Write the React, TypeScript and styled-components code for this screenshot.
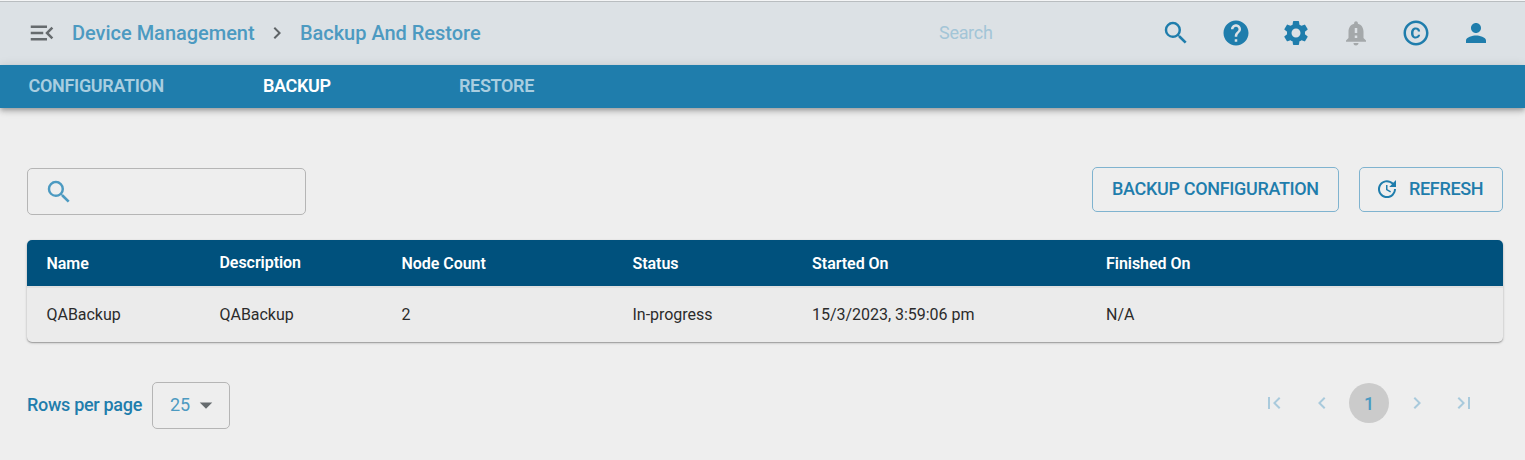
import React from "react";
import styled, { createGlobalStyle } from "styled-components";
import {
  MdArrowDropDown, MdChevronLeft, MdChevronRight, MdCopyright, MdFirstPage, MdHelp, MdLastPage,
  MdMenuOpen, MdNotificationImportant, MdPerson, MdSearch, MdSettings, MdUpdate,
} from "react-icons/md";

const GlobalStyle = createGlobalStyle`
  * { box-sizing: border-box; }
  body { margin: 0; background: #eeeeee; font-family: Roboto, sans-serif; }
  button { font-family: inherit; cursor: pointer; }
  svg { display: block; flex: none; }
`;

const Page = styled.div`
  min-height: 460px;
  background: #eeeeee;
`;

const Header = styled.header`
  display: flex;
  align-items: center;
  height: 65px;
  padding: 0 34px 0 27px;
  background: #dce1e5;
  border-top: 1px solid #f4f5f6;
  box-shadow: inset 0 1px 0 #b9bdc0;
`;

const MenuIcon = styled(MdMenuOpen)`
  color: #666b6e;
  margin-right: 15px;
`;

const Crumb = styled.a`
  color: #4c9ac1;
  font-size: 20px;
  font-weight: 500;
  letter-spacing: -0.02px;
  line-height: 30px;
`;

const Divider = styled(MdChevronRight)`
  color: #5f6467;
  margin: 0 11px 0 10.3px;
`;

const GlobalSearch = styled.input`
  width: 222px;
  margin-left: auto;
  padding: 0 0 2px;
  border: 0;
  outline: 0;
  background: transparent;
  font: 400 18px Roboto, sans-serif;
  letter-spacing: -0.3px;
  &::placeholder { color: #a3c5d7; opacity: 1; }
`;

const Actions = styled.div`
  display: flex;
  gap: 30px;
`;

const IconButton = styled.button<{ $muted?: boolean }>`
  padding: 0;
  border: 0;
  background: none;
  color: ${(p) => (p.$muted ? "#a4a8aa" : "#1f7dac")};
`;

const Tabs = styled.nav`
  display: flex;
  height: 43px;
  padding-left: 28.6px;
  background: #1f7dac;
  box-shadow: 0 2px 4px -1px rgba(0, 0, 0, 0.2), 0 4px 5px rgba(0, 0, 0, 0.14), 0 1px 10px rgba(0, 0, 0, 0.12);
`;

const Tab = styled.a<{ $width: number; $active?: boolean }>`
  width: ${(p) => p.$width}px;
  color: ${(p) => (p.$active ? "#ffffff" : "#a9cee0")};
  font-size: 18px;
  font-weight: 600;
  letter-spacing: -0.34px;
  line-height: 42px;
`;

const Main = styled.main`
  padding: 59px 22px 0 27px;
`;

const Toolbar = styled.div`
  display: flex;
  align-items: flex-start;
  gap: 20px;
`;

const FilterBox = styled.label`
  display: flex;
  align-items: center;
  width: 279px;
  height: 47px;
  margin: 1px auto 0 0;
  padding-left: 16px;
  border: 1px solid #b5b5b5;
  border-radius: 5px;
  color: #4c9ac1;
`;

const OutlinedButton = styled.button<{ $inset: number; $width: number }>`
  display: flex;
  align-items: center;
  gap: 10.5px;
  width: ${(p) => p.$width}px;
  height: 45px;
  padding: 0 0 1px ${(p) => p.$inset}px;
  border: 1px solid #7fb3cf;
  border-radius: 5px;
  background: transparent;
  color: #1f7dac;
  font-size: 18px;
  font-weight: 500;
  letter-spacing: -0.33px;
  white-space: nowrap;
`;

const ButtonLabel = styled.span`
  padding-bottom: 2px;
`;

const Table = styled.div`
  margin-top: 25px;
  border-radius: 5px;
  background: #ebebeb;
  overflow: hidden;
  box-shadow: 0 1px 1px rgba(0, 0, 0, 0.22), 0 1px 3px rgba(0, 0, 0, 0.2);
`;

const columns = "173px 182px 231px 179.6px 294px 1fr";

const HeadRow = styled.div`
  display: grid;
  grid-template-columns: ${columns};
  height: 46px;
  padding-left: 19.5px;
  background: #00517d;
  color: #ffffff;
  font-size: 16px;
  font-weight: 600;
  letter-spacing: -0.05px;
`;

const BodyRow = styled.div`
  display: grid;
  grid-template-columns: ${columns};
  height: 56px;
  padding-left: 19.5px;
  border-top: 2px solid #e0e0e0;
  color: #2b2b2b;
  font-size: 16px;
  letter-spacing: -0.03px;
  line-height: 54px;
`;

const HeadCell = styled.span<{ $raised?: boolean }>`
  line-height: ${(p) => (p.$raised ? "45px" : "47px")};
`;

const Footer = styled.footer`
  display: flex;
  align-items: flex-start;
  margin-top: 40px;
`;

const RowsLabel = styled.span`
  width: 125px;
  color: #1f7dac;
  font-size: 18px;
  font-weight: 500;
  letter-spacing: -0.3px;
  line-height: 46px;
`;

const RowsSelect = styled.button`
  display: flex;
  align-items: center;
  gap: 1px;
  width: 78px;
  height: 47px;
  padding: 0 0 1px 17px;
  border: 1px solid #b5b5b5;
  border-radius: 5px;
  background: transparent;
  color: #4c9ac1;
  font-size: 18px;
  letter-spacing: -0.2px;
  svg { color: #666b6e; }
`;

const SelectValue = styled.span`
  padding-bottom: 1px;
`;

const Pager = styled.div`
  display: flex;
  align-items: center;
  gap: 23.5px;
  height: 40px;
  margin: 1px 27px 0 auto;
  color: #a9cadc;
`;

const CurrentPage = styled.button`
  width: 40px;
  height: 40px;
  margin: 0 -8px;
  padding: 0;
  border: 0;
  border-radius: 50%;
  background: #cbcbcb;
  color: #4c9ac1;
  font-size: 18px;
  font-weight: 500;
`;

const headings = ["Name", "Description", "Node Count", "Status", "Started On", "Finished On"];
const backups = [["QABackup", "QABackup", "2", "In-progress", "15/3/2023, 3:59:06 pm", "N/A"]];

export default function App() {
  return (
    <Page>
      <GlobalStyle />
      <Header>
        <MenuIcon size={30} />
        <Crumb>Device Management</Crumb>
        <Divider size={24} />
        <Crumb>Backup And Restore</Crumb>
        <GlobalSearch placeholder="Search" />
        <Actions>
          <IconButton><MdSearch size={30} /></IconButton>
          <IconButton><MdHelp size={30} /></IconButton>
          <IconButton><MdSettings size={30} /></IconButton>
          <IconButton $muted><MdNotificationImportant size={30} /></IconButton>
          <IconButton><MdCopyright size={30} /></IconButton>
          <IconButton><MdPerson size={30} /></IconButton>
        </Actions>
      </Header>
      <Tabs>
        <Tab $width={234.4}>CONFIGURATION</Tab>
        <Tab $width={196} $active>BACKUP</Tab>
        <Tab $width={120}>RESTORE</Tab>
      </Tabs>
      <Main>
        <Toolbar>
          <FilterBox><MdSearch size={30} /></FilterBox>
          <OutlinedButton $inset={19} $width={247}><ButtonLabel>BACKUP CONFIGURATION</ButtonLabel></OutlinedButton>
          <OutlinedButton $inset={14.5} $width={144}><MdUpdate size={24} /><ButtonLabel>REFRESH</ButtonLabel></OutlinedButton>
        </Toolbar>
        <Table>
          <HeadRow>
            {headings.map((h) => <HeadCell key={h} $raised={h === "Description"}>{h}</HeadCell>)}
          </HeadRow>
          {backups.map((row, r) => (
            <BodyRow key={r}>{row.map((cell, i) => <span key={i}>{cell}</span>)}</BodyRow>
          ))}
        </Table>
        <Footer>
          <RowsLabel>Rows per page</RowsLabel>
          <RowsSelect><SelectValue>25</SelectValue><MdArrowDropDown size={30} /></RowsSelect>
          <Pager>
            <MdFirstPage size={24} />
            <MdChevronLeft size={24} />
            <CurrentPage>1</CurrentPage>
            <MdChevronRight size={24} />
            <MdLastPage size={24} />
          </Pager>
        </Footer>
      </Main>
    </Page>
  );
}
